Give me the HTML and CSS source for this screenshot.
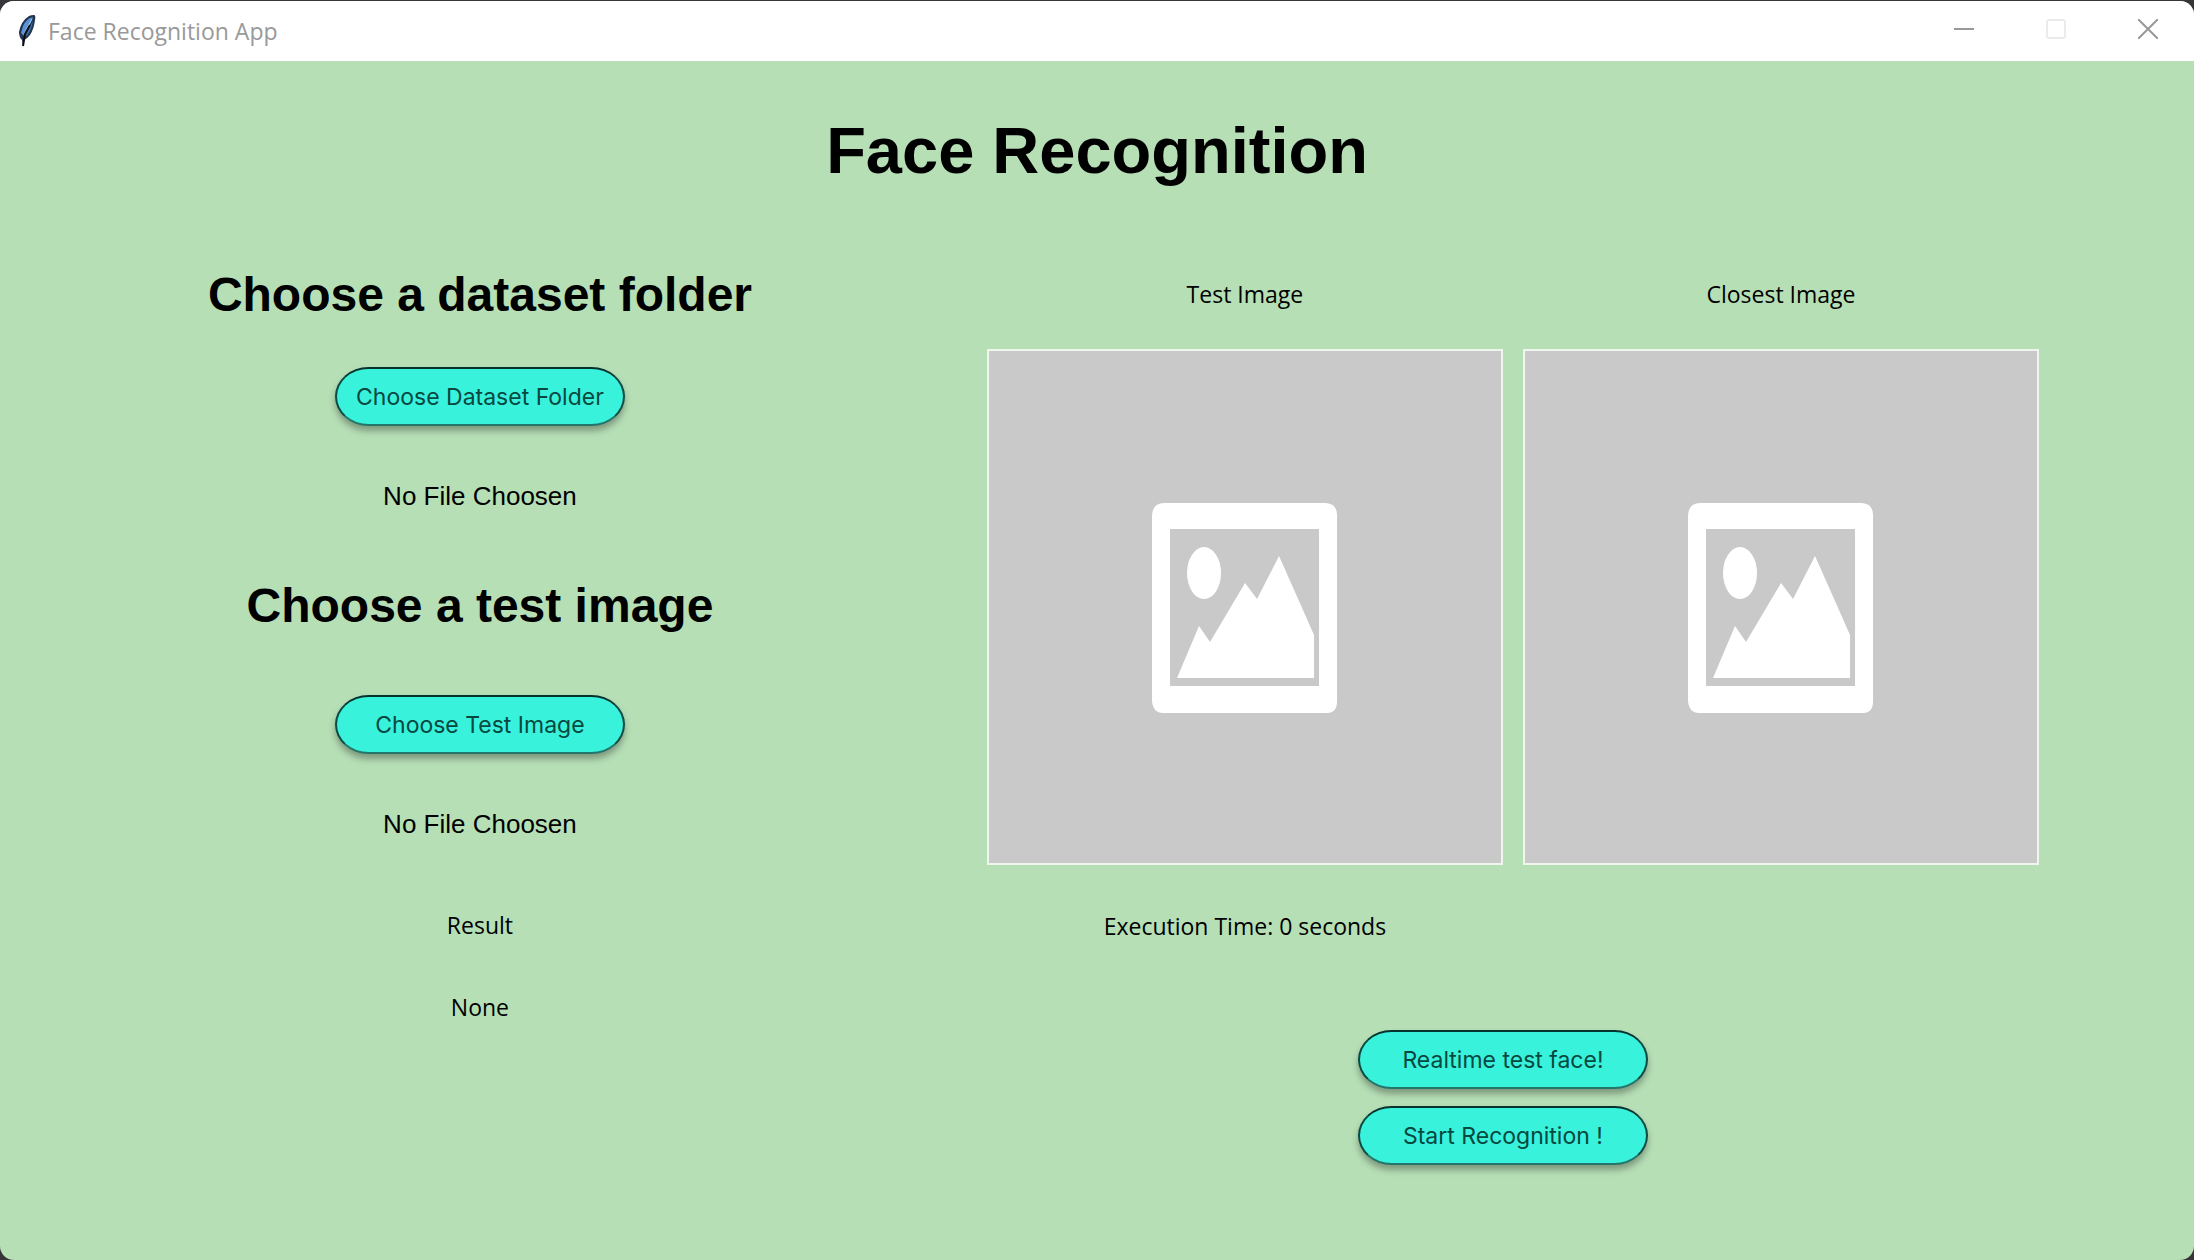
FILE: index.html
```html
<!DOCTYPE html>
<html lang="en">
<head>
  <meta charset="utf-8">
  <meta name="viewport" content="width=device-width, initial-scale=1">
  <title>Face Recognition App</title>
  <link rel="stylesheet" href="styles.css">
</head>
<body>
  <svg class="sprite" aria-hidden="true">
    <symbol id="placeholder" viewBox="2 2 512 512">
      <path fill="#fff" fill-rule="evenodd" d="M177 154H339Q350 155 350 166V352Q350 364 340 364H176Q166 364 165 352V166Q166 154 177 154ZM183 180V337H332V180Z"/>
      <ellipse fill="#fff" cx="217" cy="224" rx="17" ry="26"/>
      <path fill="#fff" d="M190 329L212 277L223 293L258 234L270 250L292 207L327 286V329Z"/>
    </symbol>
  </svg>

  <div class="window">
    <header class="titlebar">
      <svg class="feather" viewBox="0 0 18 32" aria-hidden="true">
        <path d="M16 0Q18 0 17 5Q16 14 12 20Q9 24 6 25L6 31H5L4 25Q1 22 1 17Q3 6 11 1Q13 0 16 0Z" fill="#22344f"/>
        <path d="M15 2Q8 4 5 11L3 18L6 21L11 12Z" fill="#5b93d6"/>
        <path d="M15 6L9 17L7 22Q13 18 15 6Z" fill="#3f6fae"/>
        <path d="M14 4L9 13L6 19" fill="none" stroke="#a8caf0" stroke-width="1"/>
        <path d="M12 10L7 19L5 31" fill="none" stroke="#0b0d12" stroke-width="2"/>
      </svg>
      <span class="app-name">Face Recognition App</span>
      <div class="controls">
        <button class="control" type="button" aria-label="Minimize">
          <svg viewBox="0 0 20 20"><path d="M0 10H20"/></svg>
        </button>
        <button class="control" type="button" aria-label="Maximize" disabled>
          <svg viewBox="0 0 20 20"><rect x="1" y="1" width="18" height="18" rx="2"/></svg>
        </button>
        <button class="control" type="button" aria-label="Close">
          <svg viewBox="0 0 20 20"><path d="M0 0L20 20M20 0L0 20"/></svg>
        </button>
      </div>
    </header>

    <main class="content">
      <h1 class="title">Face Recognition</h1>
      <div class="columns">
        <section class="inputs">
          <h2 class="heading">Choose a dataset folder</h2>
          <button class="pill" type="button">Choose Dataset Folder</button>
          <p class="file">No File Choosen</p>
          <h2 class="heading heading-next">Choose a test image</h2>
          <button class="pill" type="button">Choose Test Image</button>
          <p class="file">No File Choosen</p>
          <p class="label result">Result</p>
          <p class="label result-value">None</p>
        </section>

        <section class="outputs">
          <div class="images">
            <figure class="preview">
              <figcaption class="label">Test Image</figcaption>
              <svg class="picture" role="img" aria-label="No test image"><use href="#placeholder"/></svg>
            </figure>
            <figure class="preview">
              <figcaption class="label">Closest Image</figcaption>
              <svg class="picture" role="img" aria-label="No closest image"><use href="#placeholder"/></svg>
            </figure>
            <p class="label">Execution Time: 0 seconds</p>
          </div>
          <div class="actions">
            <button class="pill" type="button">Realtime test face!</button>
            <button class="pill" type="button">Start Recognition !</button>
          </div>
        </section>
      </div>
    </main>
  </div>
</body>
</html>
```
FILE: styles.css
```css
* {
  box-sizing: border-box;
}

body {
  margin: 0;
  min-height: 100vh;
  display: flex;
  padding-top: 1px;
  background: #37353a;
  color: #000;
}

h1, h2, p, figure {
  margin: 0;
}

.sprite {
  position: absolute;
  width: 0;
  height: 0;
}

.window {
  flex: 1;
  display: flex;
  flex-direction: column;
  overflow: hidden;
  border-radius: 14px;
  background: #b6dfb6;
}

.titlebar {
  display: flex;
  align-items: center;
  height: 60px;
  padding-left: 18px;
  background: #fff;
}

.feather {
  width: 18px;
  height: 32px;
}

.app-name {
  margin-left: 12px;
  font: 23px/32px "Open Sans", "Noto Sans", sans-serif;
  color: #999;
}

.controls {
  display: flex;
  align-self: flex-start;
  margin-left: auto;
}

.control {
  display: flex;
  align-items: center;
  justify-content: center;
  width: 92px;
  height: 56px;
  padding: 0;
  border: 0;
  background: none;
}

.control svg {
  width: 20px;
  height: 20px;
  fill: none;
  stroke: #999;
  stroke-width: 2;
}

.control:disabled svg {
  stroke: #ebebeb;
}

.content {
  padding: 50px 0 80px;
}

.title {
  font: bold 65px/80px "Liberation Sans", Arial, sans-serif;
  text-align: center;
}

.columns {
  display: grid;
  grid-template-columns: 7fr 9fr;
  padding-top: 74px;
}

.inputs {
  display: flex;
  flex-direction: column;
  align-items: center;
}

.heading {
  margin-bottom: 42px;
  font: bold 48px/60px "Liberation Sans", Arial, sans-serif;
}

.heading-next {
  margin: 60px 0 59px;
}

.pill {
  width: 290px;
  height: 59px;
  padding: 0;
  border: 2px solid #0c4a42;
  border-top-color: #06332d;
  border-bottom-color: #24756a;
  border-radius: 34px / 30px;
  background: #38f2dc;
  box-shadow: 0 5px 6px rgba(60, 70, 60, 0.45);
  font: 400 23px/28px Inter, sans-serif;
  color: #08483f;
}

.file {
  margin-top: 50px;
  font: 26px/40px "Liberation Sans", Arial, sans-serif;
}

.label {
  font: 23px/40px "Open Sans", "Noto Sans", sans-serif;
  text-align: center;
}

.result {
  margin-top: 61px;
}

.result-value {
  margin-top: 42px;
}

.outputs {
  padding: 9px 155px 0 27px;
}

.images {
  display: grid;
  grid-template-columns: 1fr 1fr;
  gap: 41px 20px;
}

.preview {
  display: flex;
  flex-direction: column;
  gap: 35px;
}

.picture {
  width: 100%;
  aspect-ratio: 1;
  border: 2px solid #eef6ee;
  background: #c9c9c9;
}

.actions {
  display: flex;
  flex-direction: column;
  align-items: center;
  gap: 17px;
  padding: 84px 20px 0 0;
}
```
